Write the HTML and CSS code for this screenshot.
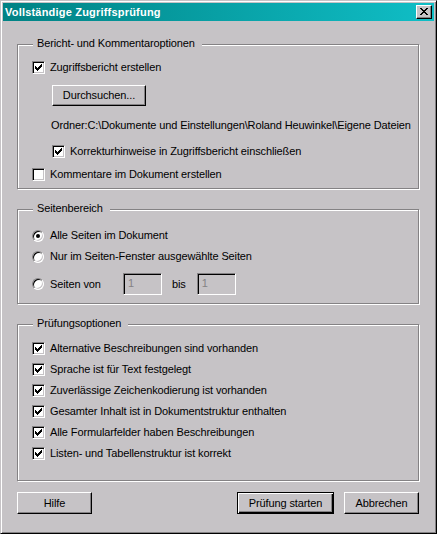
FILE: index.html
```html
<!DOCTYPE html>
<html lang="de">
<head>
<meta charset="utf-8">
<title>Vollständige Zugriffsprüfung</title>
<link rel="stylesheet" href="styles.css">
</head>
<body>
<div class="window">
  <div class="titlebar">
    <span class="title">Vollständige Zugriffsprüfung</span>
    <span class="close">
      <svg width="8" height="7" viewBox="0 0 8 7" shape-rendering="crispEdges"><path d="M0 0h2v1H0zM6 0h2v1H6zM1 1h2v1H1zM5 1h2v1H5zM2 2h4v1H2zM3 3h2v1H3zM2 4h4v1H2zM1 5h2v1H1zM5 5h2v1H5zM0 6h2v1H0zM6 6h2v1H6z" fill="#000"/></svg>
    </span>
  </div>
  <div class="content">
    <div class="group g1">
      <span class="legend">Bericht- und Kommentaroptionen</span>
      <div class="check"><span class="box"><svg class="tick" width="7" height="7" viewBox="0 0 7 7" shape-rendering="crispEdges"><path d="M0 2h1v3H0zM1 3h1v3H1zM2 4h1v3H2zM3 3h1v3H3zM4 2h1v3H4zM5 1h1v3H5zM6 0h1v3H6z" fill="#000"/></svg></span>Zugriffsbericht erstellen</div>
      <div class="indent">
        <div class="btn browse">Durchsuchen...</div>
        <div class="path">Ordner:C:\Dokumente und Einstellungen\Roland Heuwinkel\Eigene Dateien</div>
        <div class="check sub"><span class="box"><svg class="tick" width="7" height="7" viewBox="0 0 7 7" shape-rendering="crispEdges"><path d="M0 2h1v3H0zM1 3h1v3H1zM2 4h1v3H2zM3 3h1v3H3zM4 2h1v3H4zM5 1h1v3H5zM6 0h1v3H6z" fill="#000"/></svg></span>Korrekturhinweise in Zugriffsbericht einschließen</div>
      </div>
      <div class="check last"><span class="box"></span>Kommentare im Dokument erstellen</div>
    </div>

    <div class="group g2">
      <span class="legend">Seitenbereich</span>
      <div class="check"><span class="radio on"></span>Alle Seiten im Dokument</div>
      <div class="check r2"><span class="radio"></span>Nur im Seiten-Fenster ausgewählte Seiten</div>
      <div class="check r3"><span class="radio"></span><span class="lbl">Seiten von</span><span class="field">1</span><span class="bis">bis</span><span class="field">1</span></div>
    </div>

    <div class="group g3">
      <span class="legend">Prüfungsoptionen</span>
      <div class="list">
        <div class="check"><span class="box"><svg class="tick" width="7" height="7" viewBox="0 0 7 7" shape-rendering="crispEdges"><path d="M0 2h1v3H0zM1 3h1v3H1zM2 4h1v3H2zM3 3h1v3H3zM4 2h1v3H4zM5 1h1v3H5zM6 0h1v3H6z" fill="#000"/></svg></span>Alternative Beschreibungen sind vorhanden</div>
        <div class="check"><span class="box"><svg class="tick" width="7" height="7" viewBox="0 0 7 7" shape-rendering="crispEdges"><path d="M0 2h1v3H0zM1 3h1v3H1zM2 4h1v3H2zM3 3h1v3H3zM4 2h1v3H4zM5 1h1v3H5zM6 0h1v3H6z" fill="#000"/></svg></span>Sprache ist für Text festgelegt</div>
        <div class="check"><span class="box"><svg class="tick" width="7" height="7" viewBox="0 0 7 7" shape-rendering="crispEdges"><path d="M0 2h1v3H0zM1 3h1v3H1zM2 4h1v3H2zM3 3h1v3H3zM4 2h1v3H4zM5 1h1v3H5zM6 0h1v3H6z" fill="#000"/></svg></span>Zuverlässige Zeichenkodierung ist vorhanden</div>
        <div class="check"><span class="box"><svg class="tick" width="7" height="7" viewBox="0 0 7 7" shape-rendering="crispEdges"><path d="M0 2h1v3H0zM1 3h1v3H1zM2 4h1v3H2zM3 3h1v3H3zM4 2h1v3H4zM5 1h1v3H5zM6 0h1v3H6z" fill="#000"/></svg></span>Gesamter Inhalt ist in Dokumentstruktur enthalten</div>
        <div class="check"><span class="box"><svg class="tick" width="7" height="7" viewBox="0 0 7 7" shape-rendering="crispEdges"><path d="M0 2h1v3H0zM1 3h1v3H1zM2 4h1v3H2zM3 3h1v3H3zM4 2h1v3H4zM5 1h1v3H5zM6 0h1v3H6z" fill="#000"/></svg></span>Alle Formularfelder haben Beschreibungen</div>
        <div class="check"><span class="box"><svg class="tick" width="7" height="7" viewBox="0 0 7 7" shape-rendering="crispEdges"><path d="M0 2h1v3H0zM1 3h1v3H1zM2 4h1v3H2zM3 3h1v3H3zM4 2h1v3H4zM5 1h1v3H5zM6 0h1v3H6z" fill="#000"/></svg></span>Listen- und Tabellenstruktur ist korrekt</div>
      </div>
    </div>

    <div class="buttons">
      <div class="btn help">Hilfe</div>
      <div class="spacer"></div>
      <div class="btn default">Prüfung starten</div>
      <div class="btn cancel">Abbrechen</div>
    </div>
  </div>
</div>
</body>
</html>
```

FILE: styles.css
```css
* { box-sizing: border-box; }
html, body { margin: 0; padding: 0; }
body {
  font-family: "Liberation Sans", Arial, sans-serif;
  font-size: 11px;
  line-height: 13px;
  color: #000;
  background: #c6c3c6;
}
.window {
  width: 437px;
  height: 534px;
  background: #c6c3c6;
  border: 1px solid;
  border-color: #c6c3c6 #000 #000 #c6c3c6;
  box-shadow: inset 1px 1px 0 #fff, inset -1px -1px 0 #848284;
  padding: 2px;
  display: flex;
  flex-direction: column;
}
.titlebar {
  height: 18px;
  background: linear-gradient(to right, #008284, #10bec6);
  display: flex;
  align-items: center;
  padding-left: 2px;
  padding-right: 2px;
}
.title {
  color: #fff;
  font-weight: bold;
  font-size: 11px;
  letter-spacing: 0.2px;
  white-space: nowrap;
}
.close {
  margin-left: auto;
  width: 16px;
  height: 14px;
  background: #c6c3c6;
  border: 1px solid;
  border-color: #fff #000 #000 #fff;
  box-shadow: inset -1px -1px 0 #848284;
  display: flex;
  justify-content: center;
  align-items: center;
  padding-bottom: 1px;
}
.close svg { display: block; }
.content {
  padding: 23px 15px 0 14px;
  display: flex;
  flex-direction: column;
  letter-spacing: -0.12px;
}
.group {
  position: relative;
  border: 1px solid #848284;
  box-shadow: 1px 1px 0 #fff, inset 1px 1px 0 #fff;
  padding-left: 14px;
  display: flex;
  flex-direction: column;
  align-items: flex-start;
}
.legend {
  position: absolute;
  top: -8px;
  left: 15px;
  padding: 0 7px 0 4px;
  background: #c6c3c6;
  white-space: nowrap;
}
.check {
  display: flex;
  align-items: center;
  height: 13px;
  white-space: nowrap;
}
.box {
  width: 13px;
  height: 13px;
  flex: none;
  margin-right: 5px;
  background: #fff;
  border: 1px solid;
  border-color: #848284 #fff #fff #848284;
  box-shadow: inset 1px 1px 0 #000, inset -1px -1px 0 #c6c3c6;
  position: relative;
}
.tick { position: absolute; left: 2px; top: 2px; display: block; }
.radio {
  width: 12px;
  height: 12px;
  flex: none;
  margin-right: 6px;
  border-radius: 50%;
  background: #fff;
  border: 1px solid;
  border-color: #848284 #fff #fff #848284;
  box-shadow: inset 1px 1px 0 #000, inset -1px -1px 0 #c6c3c6;
  display: flex;
  align-items: center;
  justify-content: center;
}
.radio.on::after {
  content: "";
  width: 4px;
  height: 4px;
  border-radius: 50%;
  background: #000;
}
.g1 { padding-top: 16px; padding-bottom: 7px; }
.indent {
  margin-left: 20px;
  display: flex;
  flex-direction: column;
  align-items: flex-start;
}
.btn {
  height: 22px;
  background: #c6c3c6;
  border: 1px solid;
  border-color: #fff #000 #000 #fff;
  box-shadow: inset -1px -1px 0 #848284;
  display: flex;
  align-items: center;
  justify-content: center;
  white-space: nowrap;
}
.browse { width: 94px; height: 21px; margin-top: 11px; }
.path { margin-top: 13px; margin-left: -1px; white-space: nowrap; height: 13px; }
.check.sub { margin-top: 13px; }
.check.last { margin-top: 10px; }

.g2 { margin-top: 20px; padding-top: 19px; padding-bottom: 8px; }
.check.r2 { margin-top: 8px; }
.check.r3 { margin-top: 10px; height: 22px; }
.lbl { width: 73px; }
.field {
  width: 39px;
  height: 22px;
  border: 1px solid;
  border-color: #848284 #fff #fff #848284;
  box-shadow: inset 1px 1px 0 #000, inset -1px -1px 0 #c6c3c6;
  color: #848284;
  padding: 3px 0 0 4px;
}
.bis { margin: 0 11px 0 10px; }

.g3 { margin-top: 20px; padding-top: 17px; padding-bottom: 20px; }
.list { display: flex; flex-direction: column; gap: 8px; }

.buttons {
  margin-top: 11px;
  display: flex;
  align-items: center;
}
.spacer { flex: 1; }
.help { width: 75px; }
.default {
  width: 97px;
  border: 1px solid #000;
  box-shadow: inset 1px 1px 0 #fff, inset -1px -1px 0 #000, inset -2px -2px 0 #848284;
}
.cancel { width: 75px; margin-left: 10px; }
```
